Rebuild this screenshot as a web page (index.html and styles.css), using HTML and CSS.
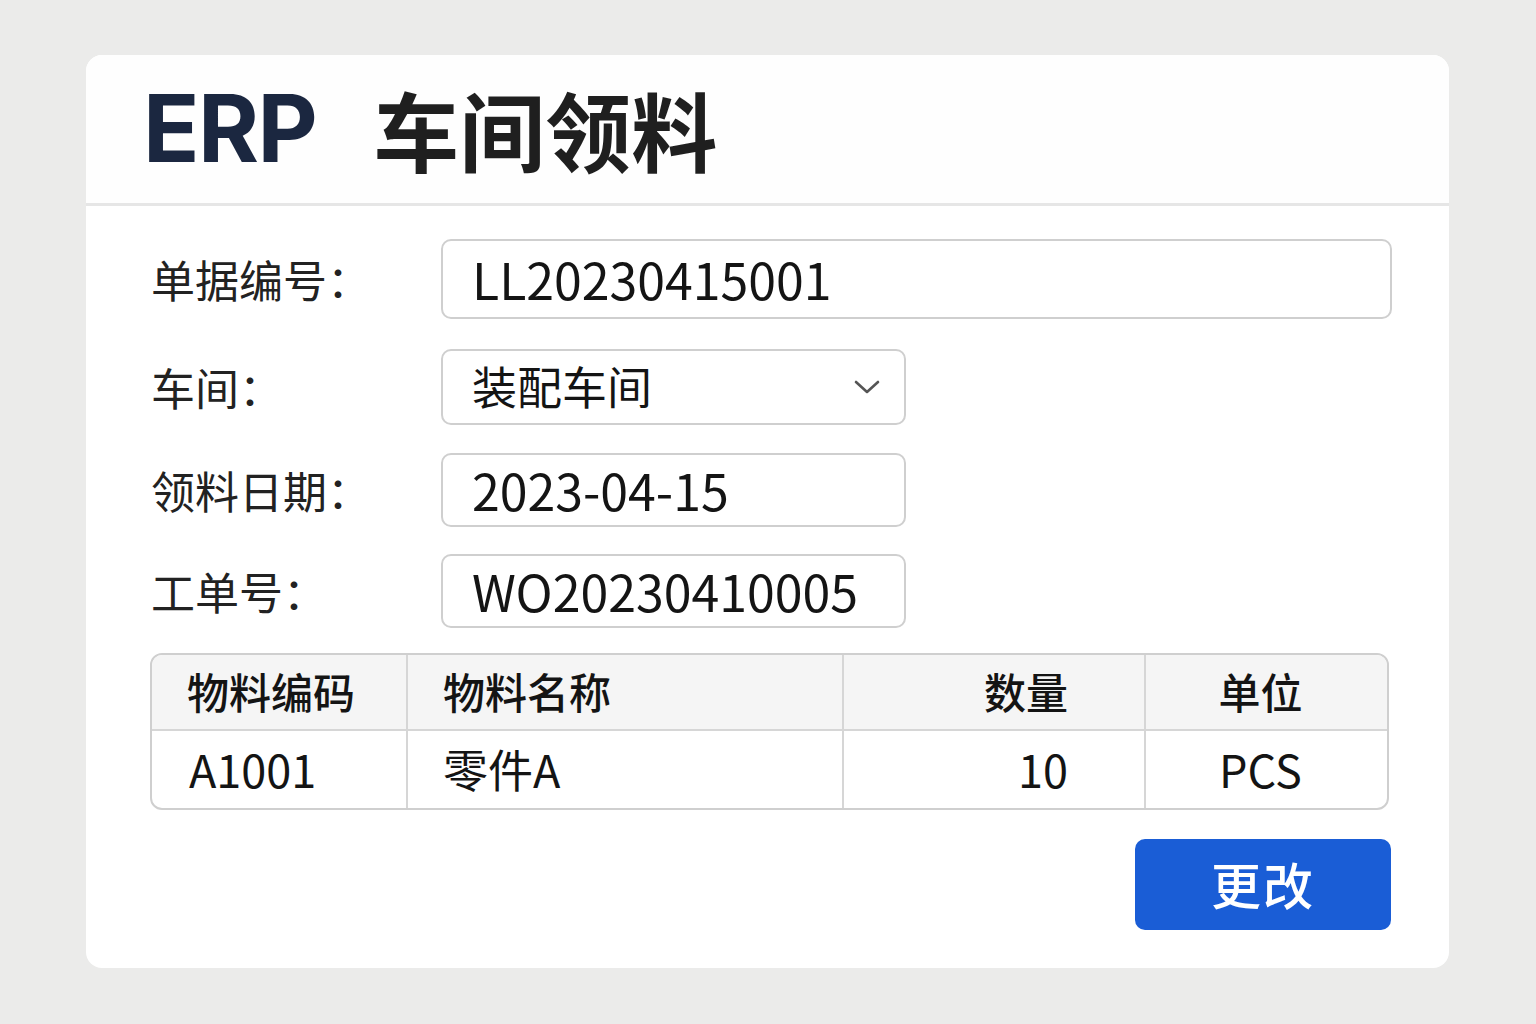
FILE: index.html
```html
<!DOCTYPE html>
<html lang="zh-CN">
<head>
<meta charset="utf-8">
<title>ERP 车间领料</title>
<link rel="stylesheet" href="styles.css">
</head>
<body>
<div class="card">
  <div class="header">
    <span class="brand">ERP</span><span class="title">车间领料</span>
  </div>
  <div class="body">
    <div class="row row1">
      <div class="label">单据编号：</div>
      <div class="field wide">LL20230415001</div>
    </div>
    <div class="row row2">
      <div class="label">车间：</div>
      <div class="field select">
        <span>装配车间</span>
        <svg class="chev" width="26" height="16" viewBox="0 0 26 16"><path d="M2 3 L13 13 L24 3" fill="none" stroke="#555" stroke-width="2.6" stroke-linecap="round" stroke-linejoin="round"/></svg>
      </div>
    </div>
    <div class="row row3">
      <div class="label">领料日期：</div>
      <div class="field">2023-04-15</div>
    </div>
    <div class="row row4">
      <div class="label">工单号：</div>
      <div class="field">WO20230410005</div>
    </div>
    <div class="table">
      <div class="tr th">
        <div class="c c1">物料编码</div>
        <div class="c c2">物料名称</div>
        <div class="c c3">数量</div>
        <div class="c c4">单位</div>
      </div>
      <div class="tr td">
        <div class="c c1">A1001</div>
        <div class="c c2">零件A</div>
        <div class="c c3">10</div>
        <div class="c c4">PCS</div>
      </div>
    </div>
    <div class="actions">
      <button class="btn">更改</button>
    </div>
  </div>
</div>
</body>
</html>
```

FILE: styles.css
```css
* { box-sizing: border-box; }
html, body { margin: 0; padding: 0; }
body {
  background: #ebebea;
  width: 1536px;
  height: 1024px;
  font-family: "Noto Sans CJK SC", "Noto Sans", sans-serif;
  color: #1e1e1e;
  padding-top: 55px;
  padding-left: 86px;
}
.card {
  width: 1363px;
  height: 913px;
  background: #ffffff;
  border-radius: 16px;
  overflow: hidden;
}
.header {
  height: 151px;
  border-bottom: 3px solid #e6e6e6;
  background: #fefefe;
  display: flex;
  align-items: center;
  padding-left: 57px;
  padding-bottom: 2px;
}
.brand {
  font-family: "Inter", "Liberation Sans", sans-serif;
  font-weight: 700;
  font-size: 93px;
  color: #1b2740;
  letter-spacing: -1.5px;
  margin-right: 57px;
}
.title {
  font-weight: 700;
  font-size: 86px;
  color: #1f1f1f;
}
.body {
  padding: 33px 57px 0 64px;
}
.row {
  display: flex;
  align-items: center;
}
.label {
  width: 291px;
  font-size: 44px;
  color: #222;
  padding-left: 1px;
}
.field {
  width: 465px;
  height: 74px;
  border: 2px solid #cfcfcf;
  border-radius: 10px;
  display: flex;
  align-items: center;
  padding-left: 29px;
  padding-bottom: 3px;
  font-size: 50px;
  color: #141414;
}
.field.wide { width: 951px; height: 80px; }
.field.select {
  height: 76px;
  justify-content: space-between;
  padding-right: 24px;
  font-size: 45px;
}
.chev { display: block; margin-top: 2px; }
.row2 { margin-top: 30px; }
.row3 { margin-top: 28px; }
.row4 { margin-top: 27px; }
.table {
  margin-top: 25px;
  width: 1239px;
  border: 2px solid #cfcfcf;
  border-radius: 12px;
  overflow: hidden;
}
.tr {
  display: grid;
  grid-template-columns: 256px 436px 302px 1fr;
}
.th {
  height: 76px;
  background: #f5f5f5;
  border-bottom: 2px solid #d6d6d6;
  font-size: 42px;
  font-weight: 500;
}
.td {
  height: 77px;
  font-size: 45px;
}
.c {
  display: flex;
  align-items: center;
  border-right: 2px solid #d6d6d6;
  color: #141414;
  padding-bottom: 3px;
}
.c4 { border-right: none; justify-content: center; padding-right: 12px; }
.c1, .c2 { padding-left: 35px; }
.td .c1 { padding-left: 37px; }
.c3 { justify-content: flex-end; padding-right: 76px; }
.actions {
  display: flex;
  justify-content: flex-end;
  margin-top: 29px;
  width: 1241px;
}
.btn {
  width: 256px;
  height: 91px;
  background: #1a5dd6;
  border: none;
  border-radius: 10px;
  color: #ffffff;
  font-family: "Noto Sans CJK SC", sans-serif;
  font-size: 50px;
  font-weight: 500;
  letter-spacing: 2px;
  padding: 0 0 4px;
}
```
